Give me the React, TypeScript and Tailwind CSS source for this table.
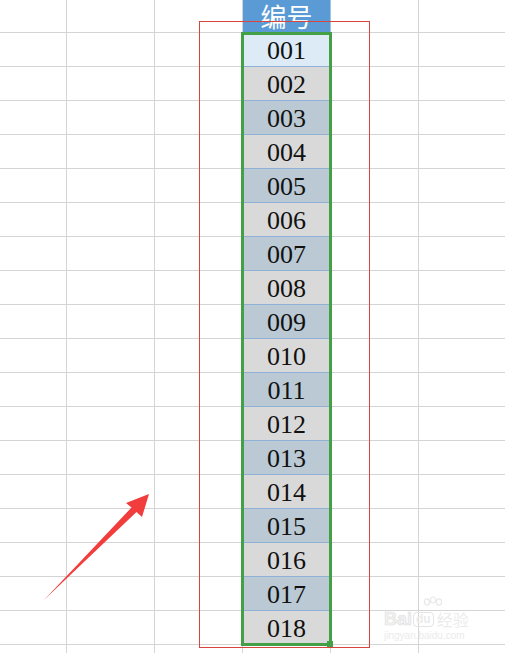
import React from 'react';

const serif = { fontFamily: '"Liberation Serif", "Times New Roman", serif' };

const colWidths = ['w-[67px]', 'w-[88px]', 'w-[88px]', 'w-[88px]', 'w-[88px]', 'w-[88px]'];

function cellFill(i: number) {
    if (i === 1) return 'bg-[#ddebf7]';
    return i % 2 === 0 ? 'bg-[#d9d9d9]' : 'bg-[#bac9d4]';
}

const Watermark = () => (
    <div className="absolute left-[384px] top-[596px] flex flex-col items-start pointer-events-none">
        <svg width="22" height="16" viewBox="0 0 22 16" className="ml-[38px]">
            <g fill="none" stroke="#e8e8e8" strokeWidth="1.2">
                <ellipse cx="5" cy="6" rx="2.6" ry="3.2" />
                <ellipse cx="11" cy="4" rx="2.6" ry="3" />
                <ellipse cx="17" cy="6" rx="2.6" ry="3.2" />
            </g>
        </svg>
        <div className="flex items-center h-[16px] -mt-[1px]">
            <span className="text-[18px] font-bold leading-none text-[#f2f2f2]" style={{ fontFamily: '"Liberation Sans", Arial, sans-serif', WebkitTextStroke: '0.7px #e2e2e2' }}>Bai</span>
            <span className="ml-[1px] px-[2px] h-[15px] rounded-[4px] border border-[#e4e4e4] text-[12px] leading-[13px] font-bold text-[#ebebeb]" style={{ fontFamily: '"Liberation Sans", Arial, sans-serif' }}>du</span>
            <span className="ml-[3px] text-[16px] leading-none text-[#ececec]" style={{ fontFamily: '"Noto Sans CJK SC", sans-serif' }}>经验</span>
        </div>
        <span className="mt-[4px] text-[10px] leading-none text-[#ebebeb]" style={{ fontFamily: '"Liberation Sans", Arial, sans-serif' }}>jingyan.baidu.com</span>
    </div>
);

export default function App() {
    const rows = Array.from({ length: 19 }, (_, i) => i + 1);

    return (
        <div className="relative w-[505px] h-[653px] overflow-hidden bg-white">
            {/* header row */}
            <div className="flex h-[33px]">
                {colWidths.map((w, c) =>
                    c === 3 ? (
                        <div
                            key={c}
                            className={`${w} shrink-0 h-full bg-[#5b9bd5] border-b border-r border-[#9dc3e6] flex items-center justify-center text-white text-[26px] leading-[32px]`}
                            style={{ fontFamily: '"Noto Sans CJK SC", sans-serif' }}
                        >
                            编号
                        </div>
                    ) : (
                        <div key={c} className={`${w} shrink-0 h-full border-b border-r border-[#d4d4d4]`} />
                    )
                )}
            </div>

            {rows.map((r) => (
                <div key={r} className="flex h-[34px]">
                    {colWidths.map((w, c) => {
                        if (c === 3 && r <= 18) {
                            return (
                                <div
                                    key={c}
                                    className={`${w} shrink-0 h-full ${cellFill(r)} border-b border-r border-b-[#8fb1d6] border-r-[#d4d4d4] flex items-center justify-center pt-[3px] text-[26px] leading-none text-[#111]`}
                                    style={serif}
                                >
                                    {String(r).padStart(3, '0')}
                                </div>
                            );
                        }
                        return <div key={c} className={`${w} shrink-0 h-full border-b border-r border-[#d4d4d4]`} />;
                    })}
                </div>
            ))}

            {/* selection */}
            <div className="absolute left-[241px] top-[32px] w-[91px] h-[614px] border-[3px] border-[#44a047] pointer-events-none" />
            <div className="absolute left-[327px] top-[641px] w-[6px] h-[6px] bg-[#44a047] pointer-events-none" />

            {/* annotation frame */}
            <div className="absolute left-[199px] top-[21px] w-[171px] h-[627px] border border-[#d8453f] pointer-events-none" />

            {/* arrow */}
            <svg className="absolute left-0 top-0 pointer-events-none" width="505" height="653" viewBox="0 0 505 653">
                <polygon
                    points="149,494 142,517 136.5,512 44,600 131.5,507.5 126,503"
                    fill="#f23d3d"
                />
            </svg>

            <Watermark />
        </div>
    );
}
